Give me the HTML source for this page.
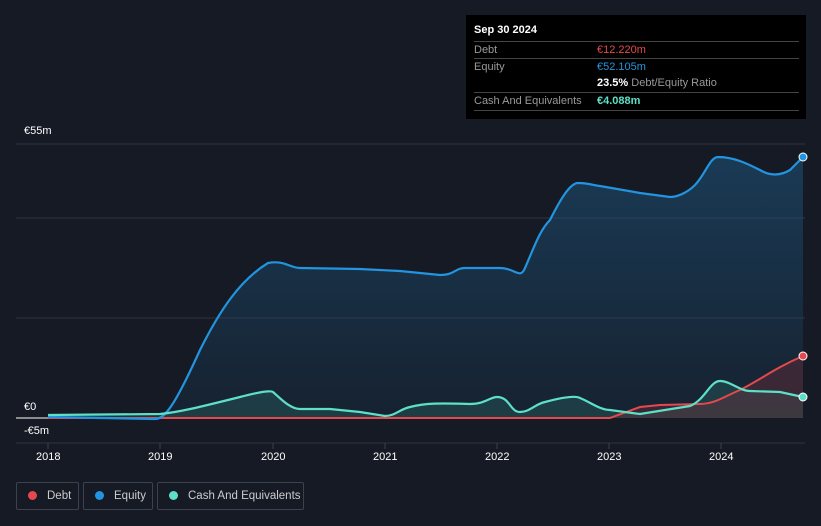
<!DOCTYPE html>
<html><head><style>
body{margin:0;width:821px;height:526px;background:#151a24;font-family:"Liberation Sans",sans-serif;overflow:hidden;position:relative}
.t{position:absolute;font-size:11px;color:#fff}
.tip{position:absolute;left:466px;top:15px;width:340px;height:104px;background:#000;}
.tip .r{position:absolute;left:8px;width:325px;border-bottom:1px solid #444;font-size:11px;color:#999;}
.leg{position:absolute;top:482px;height:28px;border:1px solid #3c424d;border-radius:2px;font-size:11.5px;color:#ccc;line-height:26px;box-sizing:border-box;white-space:nowrap;overflow:hidden}
.leg i{display:inline-block;width:9px;height:9px;border-radius:50%;margin:0 10px 0 11px;vertical-align:-1px}
</style></head><body>
<svg width="821" height="526" style="position:absolute;left:0;top:0">
<defs><linearGradient id="g" x1="0" y1="0" x2="0" y2="1"><stop offset="0" stop-color="#1f5a86" stop-opacity=".5"/><stop offset="1" stop-color="#1f5a86" stop-opacity=".12"/></linearGradient></defs>
<g stroke="#2e3440" stroke-width="1"><line x1="16" y1="144" x2="805" y2="144"/><line x1="16" y1="218" x2="805" y2="218"/><line x1="16" y1="318" x2="805" y2="318"/><line x1="16" y1="443" x2="805" y2="443"/></g>
<g stroke="#3a404b"><line x1="48" y1="443" x2="48" y2="449"/><line x1="160" y1="443" x2="160" y2="449"/><line x1="273" y1="443" x2="273" y2="449"/><line x1="385" y1="443" x2="385" y2="449"/><line x1="497" y1="443" x2="497" y2="449"/><line x1="609" y1="443" x2="609" y2="449"/><line x1="721" y1="443" x2="721" y2="449"/></g>
<path d="M48,417 L155,419 C165,419 175,405 200,350 C220,310 240,280 268,263 C285,260 290,268 300,268 L360,269 L400,271 L440,275 C455,275 455,268 465,268 L500,268 C515,268 520,280 525,268 C535,245 540,230 550,220 C560,200 570,183 578,183 C590,183 595,186 600,186 L640,193 L670,197 C680,197 690,190 695,185 C705,175 710,157 718,157 C735,157 750,165 760,170 C770,176 780,176 790,170 L803,157 L803,418 L48,418 Z" fill="url(#g)"/>
<path d="M48,415 L160,414 C180,412 200,407 240,397 C255,393 270,390 273,392 C280,398 290,409 300,409 L330,409 L360,412 L385,416 C395,416 400,409 410,407 C425,403 440,403 470,404 C485,404 490,397 497,397 C510,397 510,412 520,412 C530,412 535,404 545,402 C560,398 575,395 580,398 C590,402 600,410 610,410 L640,414 L690,406 C705,400 710,381 720,381 C730,381 740,391 750,391 L780,392 L803,397 L803,418 L48,418 Z" fill="#2a6e6a" fill-opacity=".35"/>
<path d="M610,418 L640,407 L660,405 L700,404 C715,404 725,396 740,390 C760,380 775,368 803,356 L803,418 Z" fill="#7a2e3a" fill-opacity=".35"/>
<line x1="16" y1="418" x2="48" y2="418" stroke="#fff" stroke-width="1"/>
<path d="M48,418 L610,418 L640,407 L660,405 L700,404 C715,404 725,396 740,390 C760,380 775,368 803,356" fill="none" stroke="#e5484d" stroke-width="2"/>
<path d="M48,417 L155,419 C165,419 175,405 200,350 C220,310 240,280 268,263 C285,260 290,268 300,268 L360,269 L400,271 L440,275 C455,275 455,268 465,268 L500,268 C515,268 520,280 525,268 C535,245 540,230 550,220 C560,200 570,183 578,183 C590,183 595,186 600,186 L640,193 L670,197 C680,197 690,190 695,185 C705,175 710,157 718,157 C735,157 750,165 760,170 C770,176 780,176 790,170 L803,157" fill="none" stroke="#2394df" stroke-width="2.2"/>
<path d="M48,415 L160,414 C180,412 200,407 240,397 C255,393 270,390 273,392 C280,398 290,409 300,409 L330,409 L360,412 L385,416 C395,416 400,409 410,407 C425,403 440,403 470,404 C485,404 490,397 497,397 C510,397 510,412 520,412 C530,412 535,404 545,402 C560,398 575,395 580,398 C590,402 600,410 610,410 L640,414 L690,406 C705,400 710,381 720,381 C730,381 740,391 750,391 L780,392 L803,397" fill="none" stroke="#5ee0c8" stroke-width="2.2"/>
<circle cx="803" cy="157" r="4" fill="#2394df" stroke="#fff" stroke-width="1"/>
<circle cx="803" cy="356" r="4" fill="#e5484d" stroke="#fff" stroke-width="1"/>
<circle cx="803" cy="397" r="4" fill="#5ee0c8" stroke="#fff" stroke-width="1"/>
</svg>
<div class="t" style="left:24px;top:125px">€55m</div>
<div class="t" style="left:24px;top:401px">€0</div>
<div class="t" style="left:24px;top:425px">-€5m</div>
<div class="t" style="left:36px;top:451px">2018</div><div class="t" style="left:148px;top:451px">2019</div><div class="t" style="left:261px;top:451px">2020</div><div class="t" style="left:373px;top:451px">2021</div><div class="t" style="left:485px;top:451px">2022</div><div class="t" style="left:597px;top:451px">2023</div><div class="t" style="left:709px;top:451px">2024</div>
<div class="tip">
<div style="position:absolute;left:8px;top:9px;font-size:11px;color:#fff;font-weight:bold">Sep 30 2024</div>
<div class="r" style="top:26px;height:0"></div>
<div class="r" style="top:27px;height:16px;line-height:16px">Debt<span style="position:absolute;left:123px;color:#e5484d">€12.220m</span></div>
<div class="r" style="top:44px;height:16px;line-height:16px;border:0">Equity<span style="position:absolute;left:123px;color:#2394df">€52.105m</span></div>
<div class="r" style="top:60px;height:17px;line-height:17px"><span style="position:absolute;left:123px"><b style="color:#fff">23.5%</b> Debt/Equity Ratio</span></div>
<div class="r" style="top:78px;height:17px;line-height:17px">Cash And Equivalents<span style="position:absolute;left:123px;color:#5ee0c8;font-weight:bold">€4.088m</span></div>
</div>
<div class="leg" style="left:16px;width:63px"><i style="background:#e5484d"></i>Debt</div>
<div class="leg" style="left:83px;width:70px"><i style="background:#2394df"></i>Equity</div>
<div class="leg" style="left:157px;width:147px"><i style="background:#5ee0c8"></i>Cash And Equivalents</div>
</body></html>
